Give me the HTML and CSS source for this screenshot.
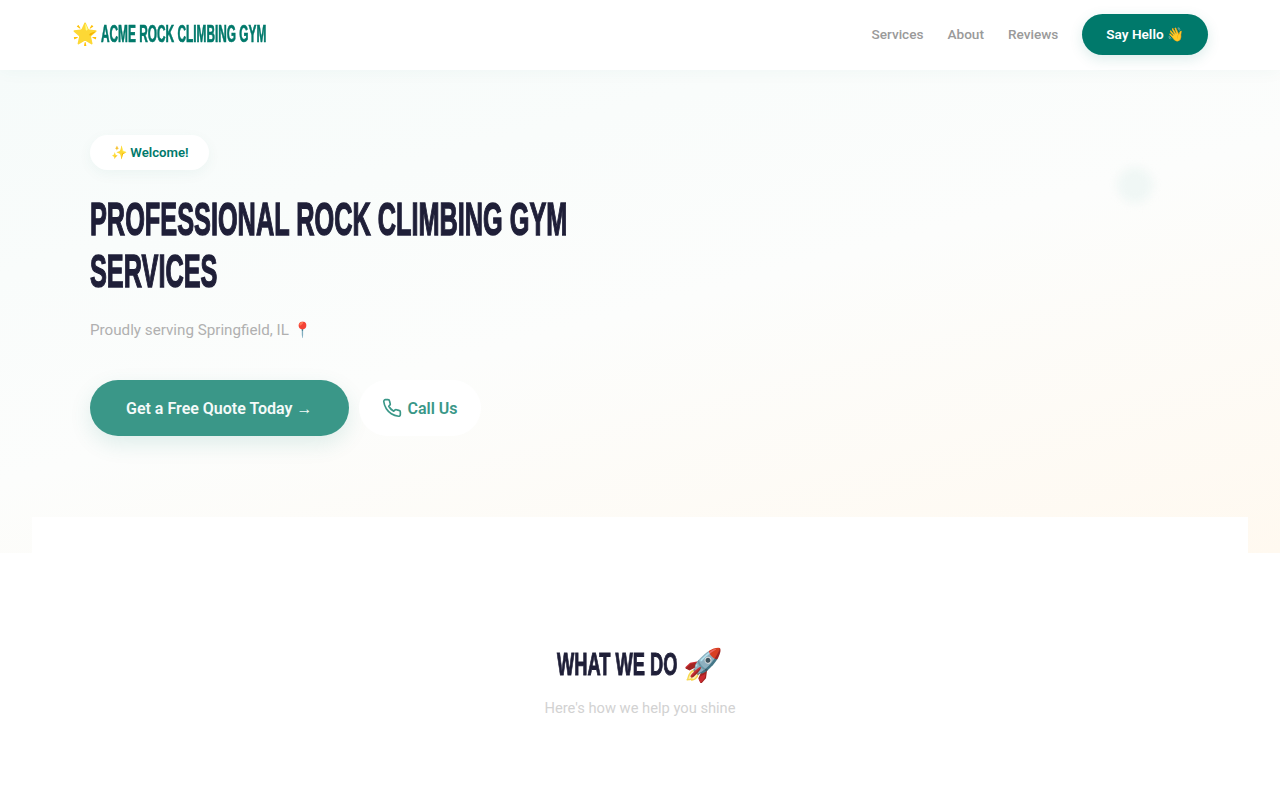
FILE: index.html
```html
<!DOCTYPE html>
<html lang="en">
  <head>
    <meta charset="UTF-8" />
    <meta name="viewport" content="width=device-width, initial-scale=1.0" />
    <title>Acme Rock Climbing Gym</title>
    <link rel="stylesheet" href="styles.css">
  </head>
  <body>
    <header class="site-header">
      <nav class="nav-inner">
        <a class="logo" href="#"><span class="logo-star">🌟</span> <span class="logo-text">ACME ROCK CLIMBING GYM</span></a>
        <div class="nav-links">
          <a href="#services">Services</a>
          <a href="#about">About</a>
          <a href="#reviews">Reviews</a>
          <a class="nav-cta" href="#contact">Say Hello 👋</a>
        </div>
      </nav>
    </header>

    <section class="hero">
      <div class="hero-blob"></div>
      <div class="hero-content">
        <span class="hero-badge">✨ Welcome!</span>
        <h1><span>PROFESSIONAL ROCK CLIMBING GYM</span><br /><span>SERVICES</span></h1>
        <p class="hero-sub">Proudly serving Springfield, IL 📍</p>
        <div class="hero-actions">
          <a class="btn-primary" href="#contact">Get a Free Quote Today →</a>
          <a class="btn-call" href="#call">
            <svg width="20" height="20" viewBox="0 0 24 24" fill="none" stroke="currentColor" stroke-width="2" stroke-linecap="round" stroke-linejoin="round">
              <path d="M22 16.92v3a2 2 0 0 1-2.18 2 19.79 19.79 0 0 1-8.63-3.07 19.5 19.5 0 0 1-6-6 19.79 19.79 0 0 1-3.07-8.67A2 2 0 0 1 4.11 2h3a2 2 0 0 1 2 1.72 12.84 12.84 0 0 0 .7 2.81 2 2 0 0 1-.45 2.11L8.09 9.91a16 16 0 0 0 6 6l1.27-1.27a2 2 0 0 1 2.11-.45 12.84 12.84 0 0 0 2.81.7A2 2 0 0 1 22 16.92z" />
            </svg>
            Call Us
          </a>
        </div>
      </div>
    </section>

    <section class="services" id="services">
      <h2><span class="h2-text">WHAT WE DO</span> <span class="h2-emoji">🚀</span></h2>
      <p>Here's how we help you shine</p>
    </section>
  </body>
</html>
```

FILE: styles.css
```css
* {
  box-sizing: border-box;
}
html,
body {
  height: 800px;
  overflow: hidden;
}
body {
  margin: 0;
  font-family: Roboto, "Liberation Sans", sans-serif;
  background-color: #fff;
  color: #1f1f38;
}
a {
  text-decoration: none;
}
.site-header {
  position: relative;
  z-index: 2;
  height: 70px;
  background-color: #fff;
  box-shadow: 0 2px 16px rgba(0, 120, 105, 0.04);
}
.nav-inner {
  height: 70px;
  padding: 0 72px 1px;
  display: flex;
  align-items: center;
  justify-content: space-between;
}
.logo {
  display: flex;
  align-items: center;
  gap: 3px;
  padding-bottom: 2px;
  color: #00796b;
}
.logo-star {
  font-size: 21px;
}
.logo-text {
  font-family: "Liberation Sans Narrow", "Liberation Sans", sans-serif;
  font-weight: 700;
  font-size: 24px;
  -webkit-text-stroke: 0.7px currentColor;
  transform: scaleX(0.494);
  transform-origin: left center;
  white-space: nowrap;
  width: 166px;
}
.nav-links {
  display: flex;
  align-items: center;
  gap: 24px;
}
.nav-links a {
  font-size: 13.6px;
  line-height: 20px;
  padding-bottom: 1px;
  font-weight: 500;
  color: #9a9a9a;
}
.nav-links .nav-cta {
  background-color: #00796b;
  color: #fff;
  font-weight: 600;
  padding: 0 24px;
  height: 41px;
  line-height: 41px;
  border-radius: 21px;
  box-shadow: 0 4px 14px rgba(0, 121, 107, 0.14);
}
.hero {
  position: relative;
  height: 483px;
  padding: 65px 90px 0;
  background: linear-gradient(165deg, #f6fbfa 0%, #fcfdfc 50%, #fff9f0 100%);
}
.hero-blob {
  position: absolute;
  left: 1117px;
  top: 97px;
  width: 36px;
  height: 36px;
  border-radius: 50%;
  background-color: #f0f7f5;
  filter: blur(4px);
}
.hero-badge {
  display: inline-block;
  background-color: #fff;
  color: #00796b;
  font-size: 13.2px;
  font-weight: 600;
  height: 35px;
  line-height: 36px;
  padding: 0 20px 0 21px;
  border-radius: 18px;
  box-shadow: 0 4px 14px rgba(0, 121, 107, 0.05);
}
.hero h1 {
  margin: 23px 0 0;
  font-family: "Liberation Sans Narrow", "Liberation Sans", sans-serif;
  font-weight: 700;
  font-size: 46px;
  line-height: 52px;
  color: #1f1f38;
  white-space: nowrap;
  -webkit-text-stroke: 1.4px currentColor;
}
.hero h1 span {
  display: inline-block;
  transform: scaleX(0.55);
  transform-origin: left center;
}
.hero-sub {
  margin: 21px 0 0;
  font-size: 15.2px;
  line-height: 24px;
  color: #b0b0b0;
}
.hero-actions {
  display: flex;
  align-items: center;
  gap: 10px;
  margin-top: 38px;
}
.btn-primary {
  height: 56px;
  line-height: 57px;
  padding: 0 36px;
  border-radius: 28px;
  background-color: #3a9788;
  color: #f4faf9;
  font-size: 16px;
  font-weight: 600;
  box-shadow: 0 8px 22px rgba(0, 121, 107, 0.12);
}
.btn-call {
  height: 56px;
  padding: 0 23px;
  border-radius: 28px;
  background-color: #fff;
  color: #3a9788;
  font-size: 16px;
  font-weight: 600;
  display: flex;
  align-items: center;
  gap: 6px;
}
.services {
  position: relative;
  margin: -36px 32px 0;
  height: 300px;
  padding-top: 128px;
  background-color: #fff;
  text-align: center;
}
.services h2 {
  margin: 0;
  display: flex;
  align-items: center;
  justify-content: center;
  gap: 6px;
  height: 40px;
  font-family: "Liberation Sans Narrow", "Liberation Sans", sans-serif;
  font-size: 31px;
  font-weight: 700;
  color: #1f1f38;
}
.h2-text {
  display: inline-block;
  width: 120px;
  transform: scaleX(0.59);
  transform-origin: left center;
  white-space: nowrap;
  text-align: left;
  -webkit-text-stroke: 1px currentColor;
}
.h2-emoji {
  font-size: 32px;
}
.services p {
  margin: 11px 0 0;
  font-size: 14.7px;
  line-height: 24px;
  color: #d2d2d2;
}
```
